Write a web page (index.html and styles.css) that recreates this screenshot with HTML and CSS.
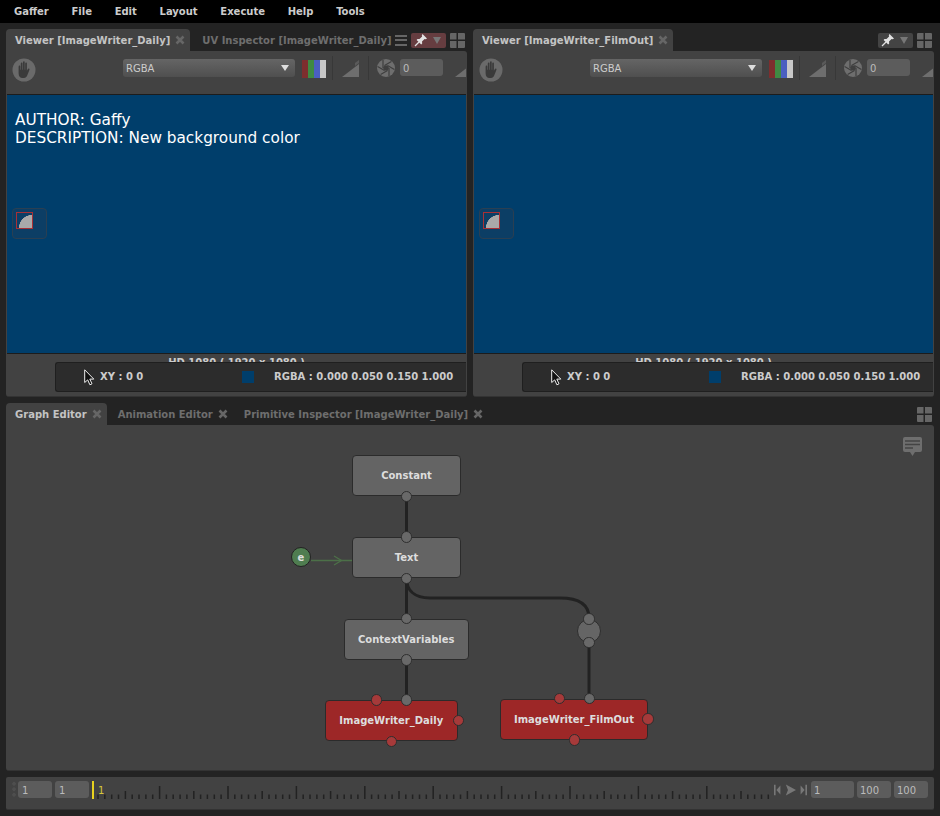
FILE: index.html
```html
<!DOCTYPE html>
<html lang="en">
<head>
<meta charset="utf-8">
<title>Gaffer</title>
<link rel="stylesheet" href="styles.css">
</head>
<body>
<svg class="defs" width="0" height="0" aria-hidden="true">
  <defs>
    <symbol id="x" viewBox="0 0 10 10"><path d="M1.5 1.5 8.5 8.5M8.5 1.5 1.5 8.5" stroke="#666" stroke-width="2.6" fill="none"/></symbol>
    <symbol id="grid" viewBox="0 0 15 15"><path d="M1 0h5.500v6.500H0V1a1 1 0 0 1 1-1ZM8 0h6a1 1 0 0 1 1 1v5.500H8ZM0 8h6.500v7H1a1 1 0 0 1-1-1ZM8 8h7v6a1 1 0 0 1-1 1H8Z" fill="#666"/></symbol>
    <symbol id="pin" viewBox="0 0 14 14"><path d="M8.500 1 13 5.500 11.700 6.300 10.600 6 8 8.600 8.200 10.600 7.200 11.500 2.600 6.900 3.500 5.900 5.500 6.100 8.100 3.400 7.800 2.300Z" fill="#e2e2e2"/><path d="M5 9 1 13" stroke="#e2e2e2" stroke-width="1.300"/></symbol>
    <symbol id="hand" viewBox="0 0 24 24"><circle cx="12" cy="12" r="11.500" fill="#6a6a6a"/><path transform="translate(12 12) scale(1 1.200) translate(-12 -12.300)" d="M6.600 9.500c0-1.200 1.700-1.200 1.700 0V12h.5V6.900c0-1.200 1.700-1.200 1.700 0V12h.5V6c0-1.200 1.700-1.200 1.700 0v6h.5V6.900c0-1.200 1.700-1.200 1.700 0V13l1-1.500c.7-1 2-.2 1.500.8l-2 4.200c-.6 1.300-1.500 2.500-3.500 2.500H10.500c-2.500 0-3.900-1.500-3.900-4Z" fill="#3a3a3a"/></symbol>
    <symbol id="ramp" viewBox="0 0 17 17"><path d="M0 17 17 4V17Z" fill="#6e6e6e"/><path d="M17 0V3L13 6V3Z" fill="#5a5a5a"/></symbol>
    <symbol id="aperture" viewBox="0 0 18 18"><circle cx="9" cy="9" r="9" fill="#6e6e6e"/><path d="M12 9V17M10.500 11.600 3.600 15.600M7.500 11.600 .6 7.600M6 9V1M7.500 6.400 14.400 2.400M10.500 6.400 17.400 10.400" stroke="#3f3f3f" stroke-width="1.200"/><path d="M12 9 10.500 11.600H7.500L6 9 7.500 6.400H10.500Z" fill="#3f3f3f"/></symbol>
    <symbol id="channels" viewBox="0 0 24 18"><rect width="6" height="18" fill="#7d2e2e"/><rect x="6" width="6" height="18" fill="#3f8a43"/><rect x="12" width="6" height="18" fill="#4a5fc0"/><rect x="18" width="6" height="18" fill="#c8c8c8"/></symbol>
    <symbol id="cursor" viewBox="0 0 11 17"><path d="M.7.800V13.500L3.700 10.900 5.900 15.800 8 14.800 5.800 10.100H9.800Z" fill="#111" stroke="#eee" stroke-width="1"/></symbol>
  </defs>
</svg>

<nav class="menubar">
  <span>Gaffer</span><span>File</span><span>Edit</span><span>Layout</span><span>Execute</span><span>Help</span><span>Tools</span>
</nav>

<main class="workspace">
  <div class="top-row">
    <section class="panel">
      <header class="tabbar">
        <div class="tab active">Viewer [ImageWriter_Daily]<svg class="close"><use href="#x"/></svg></div>
        <div class="tab uv">UV Inspector [ImageWriter_Daily]</div>
        <div class="tab-tools">
          <span class="burger"></span>
          <span class="pin-btn pinned"><svg class="pin"><use href="#pin"/></svg><i class="caret"></i></span>
          <svg class="grid"><use href="#grid"/></svg>
        </div>
      </header>
      <div class="panel-body viewer">
        <div class="toolbar">
          <svg class="hand"><use href="#hand"/></svg>
          <div class="select">RGBA<i class="select-caret"></i></div>
          <svg class="channels"><use href="#channels"/></svg>
          <span class="sep"></span>
          <svg class="ramp"><use href="#ramp"/></svg>
          <span class="sep"></span>
          <svg class="aperture"><use href="#aperture"/></svg>
          <div class="field">0</div>
          <svg class="ramp cut"><use href="#ramp"/></svg>
        </div>
        <div class="image">
          <p class="meta">AUTHOR: Gaffy<br>DESCRIPTION: New background color</p>
          <div class="thumb"><span class="swatch"></span></div>
        </div>
        <div class="format">HD 1080 ( 1920 x 1080 )</div>
        <div class="status">
          <svg class="cursor"><use href="#cursor"/></svg>
          <span class="xy">XY : 0 0</span>
          <span class="colour"></span>
          <span class="rgba">RGBA : 0.000 0.050 0.150 1.000</span>
        </div>
      </div>
    </section>

    <section class="panel">
      <header class="tabbar">
        <div class="tab active">Viewer [ImageWriter_FilmOut]<svg class="close"><use href="#x"/></svg></div>
        <div class="tab-tools">
          <span class="pin-btn"><svg class="pin"><use href="#pin"/></svg><i class="caret"></i></span>
          <svg class="grid"><use href="#grid"/></svg>
        </div>
      </header>
      <div class="panel-body viewer">
        <div class="toolbar">
          <svg class="hand"><use href="#hand"/></svg>
          <div class="select">RGBA<i class="select-caret"></i></div>
          <svg class="channels"><use href="#channels"/></svg>
          <span class="sep"></span>
          <svg class="ramp"><use href="#ramp"/></svg>
          <span class="sep"></span>
          <svg class="aperture"><use href="#aperture"/></svg>
          <div class="field">0</div>
          <svg class="ramp cut"><use href="#ramp"/></svg>
        </div>
        <div class="image">
          <div class="thumb"><span class="swatch"></span></div>
        </div>
        <div class="format">HD 1080 ( 1920 x 1080 )</div>
        <div class="status">
          <svg class="cursor"><use href="#cursor"/></svg>
          <span class="xy">XY : 0 0</span>
          <span class="colour"></span>
          <span class="rgba">RGBA : 0.000 0.050 0.150 1.000</span>
        </div>
      </div>
    </section>
  </div>

  <section class="panel graph-panel">
    <header class="tabbar">
      <div class="tab active">Graph Editor<svg class="close"><use href="#x"/></svg></div>
      <div class="tab">Animation Editor<svg class="close"><use href="#x"/></svg></div>
      <div class="tab">Primitive Inspector [ImageWriter_Daily]<svg class="close"><use href="#x"/></svg></div>
      <div class="tab-tools"><svg class="grid"><use href="#grid"/></svg></div>
    </header>
    <div class="panel-body graph">
      <svg class="comment" viewBox="0 0 19 20"><path d="M2 0H17a2 2 0 0 1 2 2V13a2 2 0 0 1-2 2H12L9.500 19 7 15H2a2 2 0 0 1-2-2V2a2 2 0 0 1 2-2Z" fill="#6e6e6e"/><path d="M2 4H17M2 7.500H17M2 11H10" stroke="#444" stroke-width="1.300"/></svg>
      <svg class="edges" width="928" height="346" viewBox="6 425 928 346">
        <g fill="none" stroke="#222" stroke-width="3">
          <path d="M406.500 496V537"/>
          <path d="M406.500 578V619"/>
          <path d="M406.500 578C406.500 590 414 598 430 598H560C578 598 589 604 589 618"/>
          <path d="M406.500 659V700"/>
          <path d="M589 643V699"/>
        </g>
        <g fill="none" stroke="#4c7048" stroke-width="1.300">
          <path d="M311 560.500H352"/>
          <path d="M334 556 341.500 560.500 334 565"/>
        </g>
      </svg>

      <div class="expr">e</div>
      <div class="node n-constant">Constant<i class="plug bottom"></i></div>
      <div class="node n-text">Text<i class="plug top"></i><i class="plug bottom"></i></div>
      <div class="node n-context">ContextVariables<i class="plug top"></i><i class="plug bottom"></i></div>
      <div class="dot"><i class="plug dot-top"></i><i class="plug dot-bottom"></i></div>
      <div class="node red n-daily">ImageWriter_Daily
        <i class="plug top in-image"></i><i class="plug top in-red"></i><i class="plug bottom out-red"></i><i class="plug right"></i>
      </div>
      <div class="node red n-film">ImageWriter_FilmOut
        <i class="plug top in-image"></i><i class="plug top in-red"></i><i class="plug bottom out-red"></i><i class="plug right"></i>
      </div>
    </div>
  </section>

  <footer class="timeline">
    <span class="grip"></span>
    <div class="field small">1</div>
    <div class="field small">1</div>
    <div class="ruler">
      <i class="playhead"></i><span class="frame">1</span>
      <svg class="ticks" width="682" height="18" viewBox="0 0 682 18"><path d=""/></svg>
    </div>
    <div class="transport">
      <svg viewBox="0 0 10 13" width="8" height="12"><path d="M0 0H2V13H0ZM8 1V12L3 6.500Z" fill="#777"/></svg>
      <svg viewBox="0 0 13 13" width="11" height="12"><path d="M1 0 13 6.500 1 13 3.500 6.500Z" fill="#777"/></svg>
      <svg viewBox="0 0 10 13" width="8" height="12"><path d="M10 0H8V13H10ZM2 1V12L7 6.500Z" fill="#777"/></svg>
    </div>
    <div class="field end-a">1</div>
    <div class="field end-b">100</div>
    <div class="field end-b">100</div>
  </footer>
</main>
<script src="ticks.js"></script>
</body>
</html>
```

FILE: ticks.js
```js
var path = document.querySelector('.ticks path');
var d = '';
for (var frame = 1; frame <= 99; frame++) {
  var x = 6 + (frame - 1) * 6.84;
  var h = frame % 10 === 0 ? 13 : frame % 5 === 0 ? 8 : 4.5;
  d += 'M' + x.toFixed(1) + ' ' + (18 - h) + 'V18';
}
path.setAttribute('d', d);
path.setAttribute('stroke', '#222');
path.setAttribute('stroke-width', '1.500');
```

FILE: styles.css
```css
* { box-sizing: border-box; }
html, body { margin: 0; height: 100%; }
body {
  width: 940px;
  height: 816px;
  overflow: hidden;
  background: #232323;
  color: #ddd;
  font-family: "DejaVu Sans", sans-serif;
  font-size: 10px;
}
.defs { position: absolute; }

.menubar {
  display: flex;
  align-items: center;
  height: 23px;
  padding: 0 0 1px 14px;
  gap: 22.700px;
  background: #000;
  color: #ccc;
  font-weight: 700;
  font-size: 10px;
}

.workspace {
  display: flex;
  flex-direction: column;
  padding: 6px 6px 0;
}
.top-row { display: flex; gap: 6px; height: 368px; }
.panel { display: flex; flex-direction: column; flex: 1 1 0; min-width: 0; }

.tabbar { display: flex; align-items: flex-end; height: 22px; flex: none; }
.tab {
  display: flex;
  align-items: center;
  flex: none;
  height: 22px;
  padding: 0 5px 0 11px;
  color: #6e6e6e;
  font-weight: 700;
  font-size: 10px;
  white-space: nowrap;
}
.tab.active { padding-left: 9px; background: #424242; color: #c4c4c4; border-radius: 4px 4px 0 0; }
.tab.uv { padding: 0 0 0 12px; }
.close { width: 10px; height: 10px; margin-left: 5px; flex: none; }
.tab-tools { display: flex; align-items: center; gap: 4px; height: 22px; margin-left: auto; padding-right: 2px; flex: none; }
.burger {
  width: 12px; height: 11px;
  background: repeating-linear-gradient(#666 0 2px, transparent 2px 4.500px);
}
.pin-btn {
  display: flex; align-items: center; justify-content: space-between;
  width: 35px; height: 15px; padding: 0 5px 0 3px;
  border-radius: 2px; background: #444;
}
.pin-btn.pinned { background: #663d40; }
.pin { width: 14px; height: 14px; }
.caret { width: 0; height: 0; border: 4px solid transparent; border-top: 7px solid #777; border-bottom: 0; }
.grid { width: 15px; height: 15px; }

.panel-body { flex: 1; min-height: 0; position: relative; background: #424242; border-radius: 0 3px 3px 3px; }
.viewer { display: flex; flex-direction: column; padding: 1px; overflow: hidden; border-bottom: 1px solid #333; }

.toolbar { display: flex; align-items: flex-start; height: 42px; padding: 6px 0 0 5px; flex: none; overflow: hidden; }
.toolbar > * { flex: none; }
.hand { width: 24px; height: 24px; }
.select {
  position: relative;
  width: 172px; height: 18px; margin: 1px 0 0 87px; padding: 0 0 0 3px;
  border-radius: 3px;
  background: linear-gradient(#656565, #4f4f4f);
  color: #ccc; font-size: 10px; line-height: 20px;
}
.select-caret {
  position: absolute; right: 6px; top: 6px;
  border: 4px solid transparent; border-top: 6px solid #ddd; border-bottom: 0;
}
.channels { width: 24px; height: 18px; margin: 2px 0 0 7px; }
.sep { width: 1px; height: 24px; margin: -2px 0 0 6px; background: #383838; }
.ramp { width: 17px; height: 17px; margin: 2px 0 0 9px; }
.ramp + .sep { margin-left: 9px; }
.aperture { width: 18px; height: 18px; margin: 1px 0 0 8px; }
.ramp.cut { margin-left: 12px; }
.field {
  flex: none;
  height: 17px; background: #5c5c5c; border-radius: 3px;
  color: #bbb; font-size: 10px; line-height: 19px; padding-left: 3px;
}
.toolbar .field { width: 43px; margin: 1px 0 0 5px; }

.image { position: relative; flex: 0 0 260px; background: #003e6b; border-top: 1px solid #1c1c1c; border-bottom: 1px solid #1c1c1c; }
.meta {
  margin: 0; position: absolute; left: 8px; top: 16px;
  color: #fff; font-size: 15.300px; line-height: 18px; white-space: nowrap;
}
.thumb {
  position: absolute; left: 5px; top: 113px; width: 35px; height: 31px;
  border: 1px solid #2a3f52; border-radius: 4px; background: #0c3e65;
}
.swatch {
  position: absolute; left: 4px; top: 4px; width: 15px; height: 15px;
  background: radial-gradient(circle at 100% 100%, #aaa 0 12.800px, transparent 13.300px);
  outline: 1px solid #a83035;
}

.format {
  height: 8px; overflow: hidden; text-align: center; padding-top: 2px;
  color: #ccc; font-weight: 700; font-size: 10px; line-height: 13px; flex: none;
}
.status {
  display: flex; align-items: center; position: relative;
  height: 30px; margin-left: 48px; padding-bottom: 2px; flex: none;
  background: #2c2c2c; border: 1px solid #1f1f1f; border-right: 0; border-radius: 3px 0 0 3px;
  color: #ccc; font-weight: 700; font-size: 10px;
}
.cursor { width: 11px; height: 17px; margin: 3px 0 0 28px; flex: none; }
.xy { position: absolute; left: 44px; }
.colour { position: absolute; left: 186px; top: 8px; width: 12px; height: 12px; background: #003e6b; }
.rgba { position: absolute; left: 218px; }

.graph-panel { flex: none; height: 368px; margin-top: 6px; }
.graph { border-bottom: 1px solid #333; }
.comment { position: absolute; right: 12px; top: 12px; width: 19px; height: 20px; }
.edges { position: absolute; left: 0; top: 0; }

.node {
  position: absolute;
  display: flex; align-items: center; justify-content: center;
  background: #646464; border: 1.500px solid #2b2b2b; border-radius: 4px;
  color: #ddd; font-weight: 700; font-size: 10px;
}
.node.red { background: #9d2727; }
.n-constant { left: 346px; top: 30px; width: 109px; height: 41px; }
.n-text { left: 346px; top: 112px; width: 109px; height: 41px; }
.n-context { left: 338px; top: 193.500px; width: 124.500px; height: 41px; }
.n-daily { left: 319px; top: 275px; width: 132.500px; height: 41px; }
.n-film { left: 494px; top: 273.500px; width: 148px; height: 41px; }

.plug {
  position: absolute; width: 11.500px; height: 11.500px;
  border-radius: 50%; background: #696969; border: 1.500px solid #2e2e2e;
}
.plug.top { top: -7px; left: calc(50% - 5.750px); }
.plug.bottom { bottom: -7px; left: calc(50% - 5.750px); }
.plug.right { right: -7.500px; top: calc(50% - 5.750px); }
.n-film .plug.right { right: -6.500px; }
.red .plug { background: #a63a3a; }
.red .plug.in-image { background: #696969; }
.n-daily .in-image { left: 74.500px; }
.n-daily .in-red { left: 44.500px; }
.n-daily .out-red { left: 59.500px; }
.n-film .in-image { left: 82.500px; }
.n-film .in-red { left: 52.500px; }
.n-film .out-red { left: 67.500px; }

.dot {
  position: absolute; left: 571px; top: 194px; width: 24px; height: 24px;
  border-radius: 50%; background: #656565; border: 1.500px solid #2e2e2e;
}
.plug.dot-top { left: 5px; top: -7px; }
.plug.dot-bottom { left: 5px; bottom: -6px; }
.expr {
  position: absolute; left: 285px; top: 122px; width: 20px; height: 20px;
  display: flex; align-items: center; justify-content: center;
  border-radius: 50%; background: #4f7d50; border: 1.500px solid #222;
  color: #ddd; font-weight: 700; font-size: 10px;
}

.timeline {
  display: flex; align-items: flex-start;
  height: 33px; margin-top: 6px; padding: 4px 3px 0 6px;
  background: #424242; border-radius: 2px; border-bottom: 1px solid #333;
}
.grip {
  width: 4px; height: 17px; margin-right: 2px; flex: none;
  background: radial-gradient(circle, #4e4e4e 0 1.500px, transparent 2px) 0 0 / 4px 5.500px;
}
.field.small { width: 34px; margin-right: 3px; padding-left: 4px; }
.ruler { position: relative; flex: 1; height: 18px; min-width: 0; }
.playhead { position: absolute; left: 0; top: 0; width: 2px; height: 18px; background: #e8d21f; }
.frame { position: absolute; left: 6px; top: 3px; color: #d8c83a; font-size: 10px; line-height: 13px; }
.ticks { position: absolute; left: 0; top: 0; }
.transport { display: flex; align-items: center; justify-content: space-between; width: 33px; margin-right: 4px; height: 17px; flex: none; }
.field.end-a { width: 43px; margin-right: 3px; }
.field.end-b { width: 34px; margin-right: 3px; }
```
